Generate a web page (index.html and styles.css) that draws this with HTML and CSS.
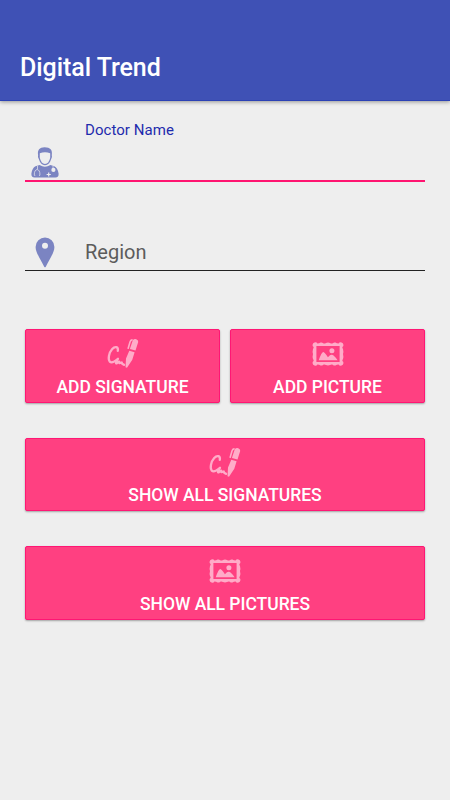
FILE: index.html
```html
<!DOCTYPE html>
<html lang="en">
<head>
<meta charset="utf-8">
<title>Digital Trend</title>
<link rel="stylesheet" href="styles.css">
</head>
<body>
<svg class="defs" aria-hidden="true">
  <symbol id="pen" viewBox="0 0 32 32">
    <path d="M10.8 12.8C11.6 8.6 8 7.9 5.2 11C1.6 15 .9 21.6 2.8 23.6C4.8 25.6 8.8 23 11 20.8C9.3 24 8.2 26 10 25.1L12.2 23.7C12.1 25.8 13 25.1 14.7 24.5C15 26.6 16 26.2 17 26.8" fill="none" stroke="currentColor" stroke-width="2.3" stroke-linecap="round" stroke-linejoin="round"/>
    <path d="M22.3 12.8 27.6 14.2 25.3 21.7 20 29.7 18.5 29.3 19 20.6ZM25.8 2.3Q27 .7 29.3 1.2 31.6 2 31.2 4.1L28.5 12.4 22.9 10.9Z" fill="currentColor"/>
    <path d="M25 1.9Q23.6 1.9 23 4L21.2 10.2" fill="none" stroke="currentColor" stroke-width="1.6" stroke-linecap="round"/>
  </symbol>
  <symbol id="picture" viewBox="0 0 32 24">
    <path fill="currentColor" fill-rule="evenodd" d="M3 .3Q4.9.2 5.4 1.5Q7.3 1.5 8.5.6Q10 .1 11.2 1.3Q12.6 1.9 14 .9Q16 0 18 .9Q19.4 1.9 20.8 1.3Q22 .1 23.5.6Q24.7 1.5 26.6 1.5Q27.1.2 29 .3Q31.4.8 31.5 3Q31.4 4.5 30.4 5Q30.2 6.2 31 7Q31.7 9.5 31 12Q31.7 14.5 31 17Q30.2 17.8 30.4 19Q31.4 19.5 31.5 21Q31.4 23.2 29 23.7Q27.1 23.8 26.6 22.5Q24.7 22.5 23.5 23.4Q22 23.9 20.8 22.7Q19.4 22.1 18 23.1Q16 24 14 23.1Q12.6 22.1 11.2 22.7Q10 23.9 8.5 23.4Q7.3 22.5 5.4 22.5Q4.9 23.8 3 23.7Q.6 23.2.5 21Q.6 19.5 1.6 19Q1.8 17.8 1 17Q.3 14.5 1 12Q.3 9.5 1 7Q1.8 6.2 1.6 5Q.6 4.5.5 3Q.6.8 3 .3ZM4.4 4.1V19.9H27.6V4.1Z"/>
    <circle cx="19.9" cy="8.7" r="2.5" fill="currentColor"/>
    <path fill="currentColor" d="M6.7 18.3Q9.6 10 11.4 10Q12.7 10.2 15.9 15.2Q18.5 12.4 20 12.8Q22.3 13.4 25.6 18.3Z"/>
  </symbol>
</svg>

<header class="app-bar"><h1>Digital Trend</h1></header>

<main>
  <div class="field field-active">
    <svg class="icon-doctor" viewBox="0 0 28 31">
      <g fill="currentColor">
        <path d="M7.1 8.2C6.2 3 8.5.4 13.6.3C19.4.3 21.6 3 20.8 8.2Q21.5 10.4 20.2 12.1C19.2 16 17 18.3 14 18.3C11 18.3 8.8 16 7.8 12.1Q6.5 10.4 7.1 8.2Z"/>
        <path d="M8.6 17.9Q13.8 21.4 19.4 17.9L23.3 19.3Q26.6 20.8 27.6 26.6Q28 30.5 24.3 30.6H3.7Q0 30.5.4 26.6Q1.2 20.9 4.5 19.3Z"/>
      </g>
      <path class="cutout" d="M8.8 6.2Q14 4.1 19.2 6.2V10.8Q17.8 17 14 17.1Q10.2 17 8.8 10.8ZM17.1 25.4H18.3V26.9H19.8V28H18.3V29.5H17.1V28H15.6V26.9H17.1Z"/>
      <circle class="cutout" cx="22.4" cy="22.9" r="2.1"/>
      <path class="tube" d="M6.5 18.8V22.4M22 18.7V21M3.2 28.4H4.3M8 28.4H9M3.3 28.2C2.8 20.7 9.5 20.7 8.9 28.2"/>
    </svg>
    <div class="field-text"><label>Doctor Name</label></div>
  </div>

  <div class="field field-region">
    <svg class="icon-pin" viewBox="0 0 20 31">
      <path fill="currentColor" fill-rule="evenodd" d="M10 .5A9.4 9.4 0 0 0 .6 9.9C.6 15.2 4.6 20.5 9.2 29.7Q10 31 10.8 29.7C15.4 20.5 19.4 15.2 19.4 9.9A9.4 9.4 0 0 0 10 .5ZM10 5.8A3 3 0 1 1 10 11.8A3 3 0 1 1 10 5.8Z"/>
    </svg>
    <span class="placeholder">Region</span>
  </div>

  <div class="actions">
    <button type="button"><svg class="icon-pen"><use href="#pen"/></svg><span>ADD SIGNATURE</span></button>
    <button type="button"><svg class="icon-picture"><use href="#picture"/></svg><span>ADD PICTURE</span></button>
    <button type="button" class="wide"><svg class="icon-pen"><use href="#pen"/></svg><span>SHOW ALL SIGNATURES</span></button>
    <button type="button" class="wide"><svg class="icon-picture"><use href="#picture"/></svg><span>SHOW ALL PICTURES</span></button>
  </div>
</main>
</body>
</html>
```
FILE: styles.css
```css
* { box-sizing: border-box; }
body {
  margin: 0;
  min-height: 800px;
  background: #eee;
  font-family: Roboto, "Liberation Sans", sans-serif;
}
.defs { display: none; }
svg { display: block; flex: none; }

.app-bar {
  height: 101px;
  padding: 53px 20px 0;
  background: #3f51b5;
  border-bottom: 1px solid #2c42b5;
  box-shadow: 0 1px 4px rgba(0, 0, 0, .38);
}
h1 {
  margin: 0;
  color: #fff;
  font-size: 25px;
  font-weight: 500;
  line-height: 30px;
  letter-spacing: -.05px;
}
main { padding: 19px 25px 0; }

.field { display: flex; color: #7b84c2; }
.field-active {
  height: 62px;
  border-bottom: 2px solid #ff1470;
  padding-left: 6px;
}
.icon-doctor { width: 28px; height: 31px; margin-top: 27px; }
.cutout { fill: #eee; }
.tube { fill: none; stroke: #d3d5e7; stroke-width: .9; }
.field-text { margin-left: 26px; }
label {
  display: block;
  color: #1e2bad;
  font-size: 15px;
  line-height: 20px;
  letter-spacing: .05px;
}
.field-region {
  height: 35px;
  margin-top: 54px;
  border-bottom: 1px solid #222;
  padding-left: 10px;
}
.icon-pin { width: 20px; height: 31px; margin-top: 1px; }
.placeholder {
  margin-left: 30px;
  color: #5c5c5c;
  font-size: 20px;
  line-height: 32px;
}

.actions {
  display: grid;
  grid-template-columns: 1fr 1fr;
  gap: 35px 10px;
  margin-top: 58px;
}
button {
  display: flex;
  flex-direction: column;
  align-items: center;
  height: 73.5px;
  padding: 0;
  border: 1px solid #ff1674;
  border-radius: 2px;
  background: #ff4081;
  box-shadow: 0 1px 2px rgba(0, 0, 0, .32);
  color: #fff;
  font: 500 17.5px/22px Roboto, "Liberation Sans", sans-serif;
  letter-spacing: -.03px;
}
.wide { grid-column: 1 / -1; }
button svg { color: #ffacc8; }
.icon-pen { width: 32px; height: 32px; margin: 8px 0 5.5px; }
.icon-picture { width: 32px; height: 24px; margin: 12px 0 9.5px; }
```
